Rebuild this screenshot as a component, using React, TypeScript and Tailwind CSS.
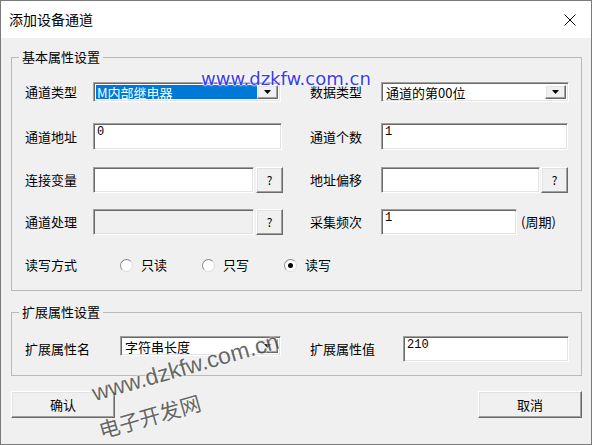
const sunken =
  "border border-[#a0a0a0] border-b-white border-r-white shadow-[inset_1px_1px_0_#696969,inset_-1px_-1px_0_#e3e3e3]";
const raised =
  "border border-white border-b-[#696969] border-r-[#696969] shadow-[inset_-1px_-1px_0_#a0a0a0,inset_1px_1px_0_#e3e3e3] bg-[#f0f0f0]";

function Combo({ text, w, selected }: { text: string; w: string; selected?: boolean }) {
  return (
    <div className={`${sunken} ${w} h-[20px] bg-white flex items-stretch p-[2px]`}>
      <div className="flex-1 flex items-center min-w-0">
        {selected ? (
          <span className="w-full h-full bg-[#0078d7] text-white flex items-center pl-[1px] leading-none">{text}</span>
        ) : (
          <span className="pl-[2px] leading-none">{text}</span>
        )}
      </div>
      <div className={`${raised} w-[21px] flex items-center justify-center`}>
        <svg width="7" height="4" viewBox="0 0 7 4">
          <path d="M0 0h7L3.5 4z" fill="#000" />
        </svg>
      </div>
    </div>
  );
}

function Edit({ value = "", w, h = "h-[27px]", disabled }: { value?: string; w: string; h?: string; disabled?: boolean }) {
  return (
    <div className={`${sunken} ${w} ${h} ${disabled ? "bg-[#f0f0f0]" : "bg-white"} pl-[3px] pt-[1px] leading-[14px] font-['Liberation_Mono','Noto_Sans_CJK_SC',monospace] text-[12px]`}>
      {value}
    </div>
  );
}

function Ask() {
  return <div className={`${raised} w-[27px] h-[26px] flex items-center justify-center text-[12px]`}>?</div>;
}

function Radio({ label, checked }: { label: string; checked?: boolean }) {
  return (
    <div className="flex items-center gap-[8px]">
      <span className="w-[13px] h-[13px] rounded-full bg-white border border-[#8a8a8a] border-b-[#dcdcdc] border-r-[#dcdcdc] flex items-center justify-center">
        {checked && <span className="w-[5px] h-[5px] rounded-full bg-black" />}
      </span>
      <span>{label}</span>
    </div>
  );
}

export default function App() {
  return (
    <div className="relative w-[592px] h-[445px] overflow-hidden border border-[#7a7a7a] bg-[#f0f0f0] text-[13px] text-black font-['Noto_Sans_CJK_SC',sans-serif]">
      {/* title bar */}
      <div className="h-[37px] bg-white flex items-center justify-between pl-[8px] pr-[15px]">
        <span className="text-[14px]">添加设备通道</span>
        <svg width="12" height="12" viewBox="0 0 12 12">
          <path d="M0.5 0.5l11 11M11.5 0.5l-11 11" stroke="#000" strokeWidth="1" />
        </svg>
      </div>

      <div className="pl-[10px] pr-[9px]">
        <fieldset className="mt-[11px] border border-[#b9b9b9]">
          <legend className="ml-[7px] px-[3px] leading-[16px]">基本属性设置</legend>
          <div className="pl-[13px] pt-[17px] pb-[17px]">
            <div className="flex items-center h-[20px]">
              <span className="w-[68px]">通道类型</span>
              <Combo text="M内部继电器" w="w-[188px]" selected />
              <span className="w-[29px]" />
              <span className="w-[71px]">数据类型</span>
              <Combo text="通道的第00位" w="w-[188px]" />
            </div>
            <div className="flex items-center mt-[21px]">
              <span className="w-[68px]">通道地址</span>
              <Edit value="0" w="w-[189px]" />
              <span className="w-[28px]" />
              <span className="w-[71px]">通道个数</span>
              <Edit value="1" w="w-[187px]" />
            </div>
            <div className="flex items-center mt-[17px]">
              <span className="w-[68px]">连接变量</span>
              <Edit w="w-[161px]" h="h-[26px]" />
              <span className="w-[2px]" />
              <Ask />
              <span className="w-[27px]" />
              <span className="w-[71px]">地址偏移</span>
              <Edit w="w-[159px]" h="h-[26px]" />
              <span className="w-[1px]" />
              <Ask />
            </div>
            <div className="flex items-center mt-[16px]">
              <span className="w-[68px]">通道处理</span>
              <Edit w="w-[161px]" h="h-[26px]" disabled />
              <span className="w-[2px]" />
              <Ask />
              <span className="w-[27px]" />
              <span className="w-[71px]">采集频次</span>
              <Edit value="1" w="w-[136px]" h="h-[26px]" />
              <span className="ml-[4px]">(周期)</span>
            </div>
            <div className="flex items-center mt-[22px] h-[16px]">
              <span className="w-[95px]">读写方式</span>
              <Radio label="只读" />
              <span className="w-[35px]" />
              <Radio label="只写" />
              <span className="w-[35px]" />
              <Radio label="读写" checked />
            </div>
          </div>
        </fieldset>

        <fieldset className="mt-[13px] border border-[#b9b9b9]">
          <legend className="ml-[7px] px-[3px] leading-[16px]">扩展属性设置</legend>
          <div className="pl-[13px] pt-[16px] pb-[13px] flex items-start">
            <div className="flex items-center h-[26px] w-[95px]">扩展属性名</div>
            <Combo text="字符串长度" w="w-[161px]" />
            <span className="w-[29px]" />
            <div className="flex items-center h-[26px] w-[93px]">扩展属性值</div>
            <Edit value="210" w="w-[166px]" h="h-[26px]" />
          </div>
        </fieldset>

        <div className="mt-[15px] flex justify-between">
          <div className={`${raised} w-[104px] h-[27px] flex items-center justify-center`}>确认</div>
          <div className={`${raised} w-[104px] h-[27px] flex items-center justify-center`}>取消</div>
        </div>
      </div>

      {/* watermarks */}
      <div className="absolute left-[200px] top-[64px] text-[18px] text-[#3b3bf0] font-['DejaVu_Sans',sans-serif] [text-shadow:0_0_2px_#fff,0_0_2px_#fff,0_0_3px_#fff]">
        www.dzkfw.com.cn
      </div>
      <div className="absolute left-[88px] top-[380px] origin-top-left -rotate-[16deg] text-[#4f4f4f] opacity-85 [text-shadow:0_0_2px_#fff,0_0_2px_#fff]">
        <div className="text-[23px] leading-[26px] font-['Liberation_Sans',sans-serif]">www.dzkfw.com.cn</div>
        <div className="text-[21px] leading-[24px] mt-[12px] -ml-[4px]">电子开发网</div>
      </div>
    </div>
  );
}
